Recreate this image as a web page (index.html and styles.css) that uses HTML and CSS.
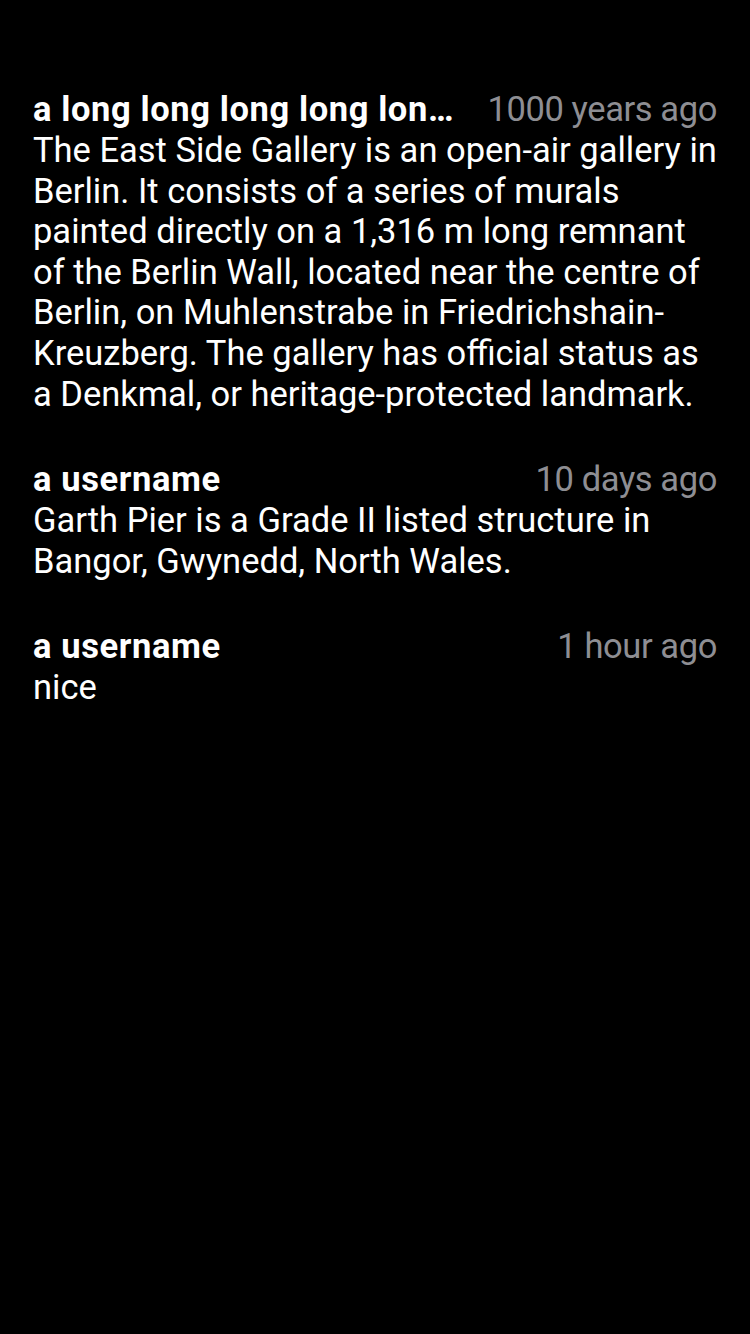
FILE: index.html
```html
<!DOCTYPE html>
<html>
<head>
<meta charset="utf-8">
<link rel="stylesheet" href="styles.css">
</head>
<body>
<main class="comments">
  <article class="comment">
    <header class="comment-head">
      <span class="user">a long long long long long long long username</span>
      <span class="time">1000 years ago</span>
    </header>
    <p class="body">The East Side Gallery is an open-air gallery in Berlin. It consists of a series of murals painted directly on a 1,316 m long remnant of the Berlin Wall, located near the centre of Berlin, on Muhlenstrabe in Friedrichshain-Kreuzberg. The gallery has official status as a Denkmal, or heritage-protected landmark.</p>
  </article>
  <article class="comment">
    <header class="comment-head">
      <span class="user">a username</span>
      <span class="time">10 days ago</span>
    </header>
    <p class="body">Garth Pier is a Grade II listed structure in Bangor, Gwynedd, North Wales.</p>
  </article>
  <article class="comment">
    <header class="comment-head">
      <span class="user">a username</span>
      <span class="time">1 hour ago</span>
    </header>
    <p class="body">nice</p>
  </article>
</main>
</body>
</html>
```
FILE: styles.css
```css
html, body {
  margin: 0;
  padding: 0;
  background: #000;
}
body {
  width: 750px;
  height: 1334px;
  font-family: Roboto, "Noto Sans", sans-serif;
  color: #fff;
}
.comments {
  display: flex;
  flex-direction: column;
  gap: 45px;
  padding: 89px 33px 0 33px;
}
.comment {
  display: flex;
  flex-direction: column;
}
.comment-head {
  display: flex;
  align-items: baseline;
  font-size: 34.5px;
  line-height: 41px;
}
.user {
  flex: 1 1 auto;
  min-width: 0;
  font-weight: 700;
  letter-spacing: 0.6px;
  white-space: nowrap;
  overflow: hidden;
  text-overflow: ellipsis;
}
.time {
  flex: 0 0 auto;
  margin-left: 30px;
  color: #8e8e93;
  letter-spacing: -0.4px;
}
.body {
  margin: 0;
  font-size: 34.5px;
  line-height: 40.6px;
}
```
